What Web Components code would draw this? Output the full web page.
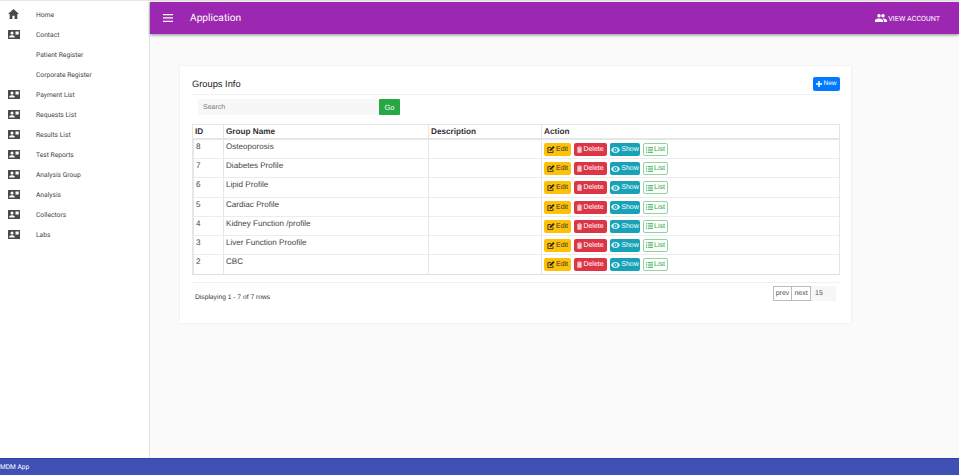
<!DOCTYPE html>
<html>
<head>
<meta charset="utf-8">
<title>MDM App</title>
<style>
    html, body { margin: 0; height: 100%; overflow: hidden; background: #fff; }
    body { font-family: "Liberation Sans", Arial, sans-serif; text-rendering: geometricPrecision; }
</style>
</head>
<body>
<app-shell>
    <side-nav slot="nav">
        <nav-item icon="home">Home</nav-item>
        <nav-item icon="card">Contact</nav-item>
        <nav-item>Patient Register</nav-item>
        <nav-item>Corporate Register</nav-item>
        <nav-item icon="card">Payment List</nav-item>
        <nav-item icon="card">Requests List</nav-item>
        <nav-item icon="card">Results List</nav-item>
        <nav-item icon="card">Test Reports</nav-item>
        <nav-item icon="card">Analysis Group</nav-item>
        <nav-item icon="card">Analysis</nav-item>
        <nav-item icon="card">Collectors</nav-item>
        <nav-item icon="card">Labs</nav-item>
    </side-nav>
    <tool-bar slot="bar"></tool-bar>
    <groups-card>
        <group-row num="8" name="Osteoporosis"></group-row>
        <group-row num="7" name="Diabetes Profile"></group-row>
        <group-row num="6" name="Lipid Profile"></group-row>
        <group-row num="5" name="Cardiac Profile"></group-row>
        <group-row num="4" name="Kidney Function /profile"></group-row>
        <group-row num="3" name="Liver Function Proofile"></group-row>
        <group-row num="2" name="CBC"></group-row>
    </groups-card>
</app-shell>
<script>
const ICONS = {
    home: '<svg width="11" height="10" viewBox="0 0 20 18"><path fill="#4a4a4a" d="M8 18v-6h4v6h5V9h3L10 0 0 9h3v9z"/></svg>',
    card: '<svg width="12" height="9" viewBox="0 0 24 18"><path fill="#4a4a4a" fill-rule="evenodd" d="M1 0h22a1 1 0 0 1 1 1v16a1 1 0 0 1-1 1H1a1 1 0 0 1-1-1V1a1 1 0 0 1 1-1zm7 3a3 3 0 1 0 0 6 3 3 0 0 0 0-6zM2.500 15h11v-1.500c0-2-3.500-3-5.500-3s-5.500 1-5.500 3zM15 3v6h6.500V3z"/></svg>',
    menu: '<svg width="10" height="8" viewBox="0 0 10 8"><path fill="#fff" d="M0 0h10v1.300H0zM0 3.300h10v1.300H0zM0 6.700h10V8H0z"/></svg>',
    people: '<svg width="12" height="8" viewBox="0 0 24 16"><path fill="#fff" d="M16 7a3.500 3.500 0 1 0 0-7 3.500 3.500 0 0 0 0 7zM8 7a3.500 3.500 0 1 0 0-7 3.500 3.500 0 0 0 0 7zm0 2c-2.700 0-8 1.300-8 4v3h16v-3c0-2.700-5.300-4-8-4zm8 0h-1c1.500 1 2.500 2.300 2.500 4v3H24v-3c0-2.700-5.300-4-8-4z"/></svg>',
    plus: '<svg width="6" height="6" viewBox="0 0 8 8"><path fill="#fff" d="M3 0h2v3h3v2H5v3H3V5H0V3h3z"/></svg>',
    edit: '<svg width="8" height="7" viewBox="0 0 10 9"><path fill="none" stroke="#222" stroke-width="1.100" d="M7.500 5.500V8.500H1V2h4"/><path fill="#222" d="M3.500 4.500L8 0l1.700 1.700L5.200 6.200l-1.900.2z"/></svg>',
    trash: '<svg width="5" height="7" viewBox="0 0 7 9"><path fill="#f7ccd1" d="M0 1h2V0h3v1h2v1H0zM.5 2.500h6V9h-6z"/></svg>',
    eye: '<svg width="9" height="6" viewBox="0 0 12 8"><path fill="#d9f1f5" fill-rule="evenodd" d="M6 0c2.700 0 4.900 1.700 6 4-1.100 2.300-3.300 4-6 4S1.100 6.300 0 4c1.100-2.300 3.300-4 6-4zm0 1.200a2.800 2.800 0 1 0 0 5.600 2.800 2.800 0 0 0 0-5.600zM6 3a1 1 0 1 1 0 2 1 1 0 0 1 0-2z"/></svg>',
    list: '<svg width="7" height="6" viewBox="0 0 10 8"><path fill="#28a745" d="M0 0h1.800v1.600H0zM3 0h7v1.600H3zM0 3.200h1.800v1.600H0zM3 3.200h7v1.600H3zM0 6.400h1.800V8H0zM3 6.400h7V8H3z"/></svg>'
};

class AppShell extends HTMLElement {
    constructor() {
        super();
        this.attachShadow({ mode: 'open' });
        this.shadowRoot.innerHTML = `
            <style>
                :host {
                    display: grid;
                    grid-template-columns: 150px 1fr;
                    grid-template-rows: 1fr 17px;
                    height: 475px;
                    width: 959px;
                    box-sizing: border-box;
                    padding-top: 1px;
                    background: #fff;
                    border-top: 1px solid #e6e6e6;
                }
                .nav { grid-row: 1; grid-column: 1; border-right: 1px solid #e4e4e4; background: #fff; }
                .main { grid-row: 1; grid-column: 2; background: #fafafa; display: flex; flex-direction: column; min-width: 0; }
                .body { flex: 1; padding: 32px 108px 0 30px; }
                footer {
                    grid-row: 2;
                    grid-column: 1 / 3;
                    background: #3f51b5;
                    border-top: 1px solid #2f3fa5;
                    color: #fff;
                    font-family: Roboto, "Liberation Sans", sans-serif;
                    font-size: 6.600px;
                    line-height: 16px;
                }
            </style>
            <div class="nav"><slot name="nav"></slot></div>
            <div class="main">
                <slot name="bar"></slot>
                <div class="body"><slot></slot></div>
            </div>
            <footer>MDM App</footer>
        `;
    }
}

class SideNav extends HTMLElement {
    constructor() {
        super();
        this.attachShadow({ mode: 'open' });
        this.shadowRoot.innerHTML = `
            <style>
                :host { display: flex; flex-direction: column; padding-top: 2px; }
            </style>
            <slot></slot>
        `;
    }
}

class NavItem extends HTMLElement {
    constructor() {
        super();
        this.attachShadow({ mode: 'open' });
    }

    connectedCallback() {
        const icon = ICONS[this.getAttribute('icon')] || '';
        this.shadowRoot.innerHTML = `
            <style>
                :host {
                    display: flex;
                    align-items: center;
                    height: 20px;
                    font-family: Roboto, "Liberation Sans", sans-serif;
                    font-size: 6.700px;
                    color: #444;
                }
                .i { width: 36px; padding-left: 8px; box-sizing: border-box; display: flex; }
                .t { padding-top: 1px; }
            </style>
            <span class="i">${icon}</span><span class="t"><slot></slot></span>
        `;
    }
}

class ToolBar extends HTMLElement {
    constructor() {
        super();
        this.attachShadow({ mode: 'open' });
        this.shadowRoot.innerHTML = `
            <style>
                :host {
                    display: flex;
                    align-items: center;
                    height: 32px;
                    padding: 0 19px 0 13px;
                    background: #9c27b0;
                    color: #fff;
                    box-shadow: 0 1px 3px rgba(0,0,0,.45);
                    font-family: Roboto, "Liberation Sans", sans-serif;
                    position: relative;
                }
                h1 { font-size: 10.200px; font-weight: 400; margin: 0 0 0 17px; flex: 1; }
                .acct { display: flex; align-items: center; gap: 1px; font-size: 7.200px; }
                svg { display: block; }
            </style>
            ${ICONS.menu}
            <h1>Application</h1>
            <span class="acct">${ICONS.people}VIEW ACCOUNT</span>
        `;
    }
}

class GroupsCard extends HTMLElement {
    constructor() {
        super();
        this.attachShadow({ mode: 'open' });
        this.shadowRoot.innerHTML = `
            <style>
                :host {
                    display: block;
                    background: #fff;
                    box-shadow: 0 0 2px rgba(0,0,0,.1);
                    padding: 10px 11px 0 12px;
                    height: 257px;
                    box-sizing: border-box;
                    color: #333;
                }
                .head {
                    display: flex;
                    justify-content: space-between;
                    align-items: center;
                    height: 18px;
                    border-bottom: 1px solid #f2f2f2;
                }
                h2 { font-size: 9.300px; font-weight: 400; margin: -2px 0 0; color: #222; }
                .new {
                    display: flex; align-items: center; gap: 1px;
                    height: 14px; width: 27px; justify-content: center;
                    background: #007bff; color: #fff; font-size: 6.500px; border-radius: 2px;
                    margin-top: -3px;
                }
                .search { display: flex; height: 16px; margin: 4px 0 9px 6px; }
                .search .in {
                    width: 181px; background: #f7f7f7; color: #777;
                    font-size: 7px; line-height: 17px; padding-left: 5px; box-sizing: border-box;
                }
                .search .go {
                    width: 21px; background: #28a745; color: #fff; font-size: 7.500px;
                    line-height: 17px; text-align: center; border-radius: 1px;
                }
                .table { border: 1px solid #e6e6e6; border-bottom: 1px solid #e0e0e0; }
                .tr { display: grid; grid-template-columns: 30px 205px 113px 1fr; height: 13px; border-bottom: 2px solid #e6e6e6; }
                .tr span {
                    font-size: 8.200px; font-weight: 700; line-height: 13px; padding-left: 2px;
                    border-left: 1px solid #e6e6e6; color: #333;
                }
                .tr span:first-child { border-left: 0; }
                .foot {
                    display: flex; justify-content: space-between; align-items: flex-start;
                    margin-top: 7px; border-top: 1px solid #f2f2f2; padding: 3px 4px 0 3px;
                }
                .count { font-size: 6.700px; color: #333; margin-top: 8px; }
                .pager { display: flex; align-items: stretch; height: 15px; font-size: 7px; color: #555; }
                .pager b {
                    font-weight: 400; border: 1px solid #bbb; width: 19px; box-sizing: border-box;
                    text-align: center; line-height: 13px;
                }
                .pager b + b { border-left: 0; }
                .pager i { font-style: normal; width: 25px; background: #f7f7f7; line-height: 15px; padding-left: 4px; box-sizing: border-box; }
                svg { display: block; }
            </style>
            <div class="head">
                <h2>Groups Info</h2>
                <span class="new">${ICONS.plus}New</span>
            </div>
            <div class="search">
                <div class="in">Search</div>
                <div class="go">Go</div>
            </div>
            <div class="table">
                <div class="tr"><span>ID</span><span>Group Name</span><span>Description</span><span>Action</span></div>
                <slot></slot>
            </div>
            <div class="foot">
                <span class="count">Displaying 1 - 7 of 7 rows</span>
                <span class="pager"><b>prev</b><b>next</b><i>15</i></span>
            </div>
        `;
    }
}

class GroupRow extends HTMLElement {
    constructor() {
        super();
        this.attachShadow({ mode: 'open' });
    }

    connectedCallback() {
        const num = this.getAttribute('num');
        const name = this.getAttribute('name');
        this.shadowRoot.innerHTML = `
            <style>
                :host {
                    display: grid;
                    grid-template-columns: 30px 205px 113px 1fr;
                    height: 19.200px;
                    box-sizing: border-box;
                    border-bottom: 1px solid #ececec;
                    font-size: 8.100px;
                    color: #444;
                }
                :host(:last-child) { border-bottom: 0; }
                .c { border-left: 1px solid #e6e6e6; padding: 1px 0 0 2px; line-height: 11px; }
                .c:first-child { border-left: 0; }
                .a { display: flex; gap: 3px; padding: 3px 0 0 2px; }
                .b {
                    display: flex; align-items: center; justify-content: center; gap: 1px;
                    height: 13px; box-sizing: border-box; border-radius: 2px; font-size: 7px;
                }
                .edit { width: 27px; background: #ffc107; color: #333; }
                .del { width: 33px; background: #dc3545; color: #fff; }
                .show { width: 30px; background: #17a2b8; color: #fff; }
                .list { width: 25px; background: #fff; color: #28a745; border: 1px solid #8fd5a2; }
                svg { display: block; }
            </style>
            <div class="c">${num}</div>
            <div class="c">${name}</div>
            <div class="c"></div>
            <div class="c a">
                <span class="b edit">${ICONS.edit}Edit</span>
                <span class="b del">${ICONS.trash}Delete</span>
                <span class="b show">${ICONS.eye}Show</span>
                <span class="b list">${ICONS.list}List</span>
            </div>
        `;
    }
}

customElements.define('app-shell', AppShell);
customElements.define('side-nav', SideNav);
customElements.define('nav-item', NavItem);
customElements.define('tool-bar', ToolBar);
customElements.define('groups-card', GroupsCard);
customElements.define('group-row', GroupRow);
</script>
</body>
</html>
